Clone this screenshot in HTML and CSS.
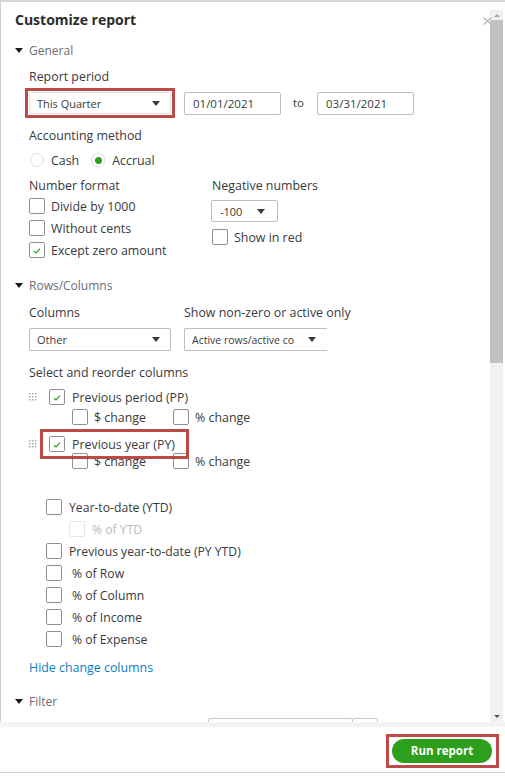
FILE: index.html
```html
<!DOCTYPE html>
<html>
<head>
<meta charset="utf-8">
<link rel="stylesheet" href="styles.css">
</head>
<body>
<div class="window">
  <div class="main">
    <div class="content">
      <h1 class="title">Customize report</h1>

      <div class="section-head m-general"><span class="tri"></span>General</div>
      <div class="body">
        <div class="label m-period">Report period</div>
        <div class="period-row">
          <div class="hl hl-period">
            <div class="select sel-period"><span>This Quarter</span><span class="caret"></span></div>
          </div>
          <div class="input date">01/01/2021</div>
          <span class="to">to</span>
          <div class="input date">03/31/2021</div>
        </div>

        <div class="label m-acct">Accounting method</div>
        <div class="radio-row">
          <span class="radio"></span><span class="rtext">Cash</span>
          <span class="radio on"></span><span class="rtext">Accrual</span>
        </div>

        <div class="num-grid">
          <div class="col">
            <div class="label">Number format</div>
            <div class="cb-list">
              <div class="cb-row"><span class="cb"></span><span>Divide by 1000</span></div>
              <div class="cb-row"><span class="cb"></span><span>Without cents</span></div>
              <div class="cb-row"><span class="cb"><svg viewBox="0 0 14 14" width="14" height="14"><path d="M4 8.2 L6 10 L10 5.6" fill="none" stroke="#2ca01c" stroke-width="1.2"/></svg></span><span>Except zero amount</span></div>
            </div>
          </div>
          <div class="col">
            <div class="label">Negative numbers</div>
            <div class="select sel-neg"><span>-100</span><span class="caret"></span></div>
            <div class="cb-row show-red"><span class="cb"></span><span>Show in red</span></div>
          </div>
        </div>
      </div>

      <div class="section-head m-rows"><span class="tri"></span>Rows/Columns</div>
      <div class="body">
        <div class="cols-grid">
          <div class="label">Columns</div>
          <div class="label">Show non-zero or active only</div>
          <div class="select sel-other"><span>Other</span><span class="caret"></span></div>
          <div class="select sel-active"><span class="clip">Active rows/active co</span><span class="caret"></span></div>
        </div>

        <div class="label m-reorder">Select and reorder columns</div>

        <div class="re-row m-pp">
          <svg class="drag" viewBox="0 0 8 8" width="8" height="8"><g fill="#a8abb0"><rect x="0" y="0" width="1.5" height="1.5"/><rect x="3" y="0" width="1.5" height="1.5"/><rect x="6" y="0" width="1.5" height="1.5"/><rect x="0" y="3" width="1.5" height="1.5"/><rect x="3" y="3" width="1.5" height="1.5"/><rect x="6" y="3" width="1.5" height="1.5"/><rect x="0" y="6" width="1.5" height="1.5"/><rect x="3" y="6" width="1.5" height="1.5"/><rect x="6" y="6" width="1.5" height="1.5"/></g></svg>
          <span class="cb"><svg viewBox="0 0 14 14" width="14" height="14"><path d="M4 8.2 L6 10 L10 5.6" fill="none" stroke="#2ca01c" stroke-width="1.2"/></svg></span>
          <span class="re-text">Previous period (PP)</span>
        </div>
        <div class="sub-row m-sub1">
          <div class="sub-item"><span class="cb"></span><span>$ change</span></div>
          <div class="sub-item"><span class="cb"></span><span>% change</span></div>
        </div>

        <div class="re-row m-py">
          <svg class="drag" viewBox="0 0 8 8" width="8" height="8"><g fill="#a8abb0"><rect x="0" y="0" width="1.5" height="1.5"/><rect x="3" y="0" width="1.5" height="1.5"/><rect x="6" y="0" width="1.5" height="1.5"/><rect x="0" y="3" width="1.5" height="1.5"/><rect x="3" y="3" width="1.5" height="1.5"/><rect x="6" y="3" width="1.5" height="1.5"/><rect x="0" y="6" width="1.5" height="1.5"/><rect x="3" y="6" width="1.5" height="1.5"/><rect x="6" y="6" width="1.5" height="1.5"/></g></svg>
          <div class="hl hl-py">
            <span class="cb"><svg viewBox="0 0 14 14" width="14" height="14"><path d="M4 8.2 L6 10 L10 5.6" fill="none" stroke="#2ca01c" stroke-width="1.2"/></svg></span>
            <span class="re-text">Previous year (PY)</span>
          </div>
        </div>
        <div class="sub-row m-sub2">
          <div class="sub-item"><span class="cb"></span><span>$ change</span></div>
          <div class="sub-item"><span class="cb"></span><span>% change</span></div>
        </div>

        <div class="extra-list">
          <div class="ex-row"><span class="cb"></span><span>Year-to-date (YTD)</span></div>
          <div class="ex-row ex-sub disabled"><span class="cb"></span><span>% of YTD</span></div>
          <div class="ex-row"><span class="cb"></span><span>Previous year-to-date (PY YTD)</span></div>
          <div class="ex-row wide"><span class="cb"></span><span>% of Row</span></div>
          <div class="ex-row wide"><span class="cb"></span><span>% of Column</span></div>
          <div class="ex-row wide"><span class="cb"></span><span>% of Income</span></div>
          <div class="ex-row wide"><span class="cb"></span><span>% of Expense</span></div>
        </div>

        <div class="link">Hide change columns</div>
      </div>

      <div class="section-head m-filter"><span class="tri"></span>Filter</div>
      <div class="body">
        <div class="partial">
          <div class="pinput p1"></div>
          <div class="pinput p2"></div>
        </div>
      </div>
    </div>

    <div class="scrollbar">
      <div class="sb-up"><span class="up-tri"></span></div>
      <div class="sb-thumb"></div>
      <div class="sb-track"></div>
      <div class="sb-down"><span class="down-tri"></span></div>
    </div>

    <svg class="close" viewBox="0 0 9 8" width="9" height="8"><path d="M0.5 0.5 L8.5 7.5 M8.5 0.5 L0.5 7.5" stroke="#b3b3b3" stroke-width="1.1"/></svg>
  </div>

  <div class="divider"></div>
  <div class="footer">
    <div class="hl hl-run"><button class="run">Run report</button></div>
  </div>
</div>
</body>
</html>
```

FILE: styles.css
```css
* { box-sizing: border-box; }

body {
  margin: 0;
  background: #fff;
  font-family: "Open Sans", "Liberation Sans", sans-serif;
  color: #393a3d;
}

.window {
  width: 505px;
  height: 776px;
  border-top: 2px solid #d3d4d6;
  display: flex;
  flex-direction: column;
  overflow: hidden;
}

.main {
  height: 720px;
  display: flex;
  border-left: 1px solid #cfd0d2;
  position: relative;
  flex: none;
}

.content {
  flex: 1;
  overflow: hidden;
  padding-left: 14px;
}

.title {
  margin: 10px 0 0;
  height: 16px;
  line-height: 16px;
  font-size: 14px;
  font-weight: 700;
  color: #2b2c2f;
}

.section-head {
  display: flex;
  align-items: center;
  height: 16px;
  font-size: 12px;
  color: #6b6c72;
}
.m-general { margin-top: 14px; }
.m-rows { margin-top: 16px; }
.m-filter { margin-top: 17px; }

.tri {
  width: 0;
  height: 0;
  border-left: 4px solid transparent;
  border-right: 4px solid transparent;
  border-top: 5px solid #1c1c1e;
  margin-right: 6px;
}

.body { padding-left: 14px; }

.label {
  height: 16px;
  line-height: 16px;
  font-size: 12.4px;
  white-space: nowrap;
  color: #393a3d;
}
.m-period { margin-top: 11px; }
.m-acct { margin-top: 10px; }
.m-reorder { margin-top: 14px; }

/* highlight annotation frames */
.hl {
  border: 3px solid #be4a47;
}

.period-row {
  margin-top: 3px;
  height: 30px;
  display: flex;
  align-items: center;
}

.hl-period {
  margin-left: -4px;
  padding: 1px;
  width: 150px;
  height: 30px;
}

.select {
  display: flex;
  align-items: center;
  justify-content: space-between;
  border: 1px solid #babec5;
  border-radius: 2px;
  background: #fff;
  font-size: 11px;
  color: #393a3d;
  white-space: nowrap;
}
.caret {
  width: 0;
  height: 0;
  border-left: 4px solid transparent;
  border-right: 4px solid transparent;
  border-top: 5px solid #393a3d;
  flex: none;
}

.sel-period {
  width: 142px;
  height: 22px;
  padding: 0 10px 0 7px;
  border-color: #e2e3e5;
}

.input {
  border: 1px solid #babec5;
  border-radius: 2px;
  font-size: 11.5px;
  line-height: 21px;
  color: #393a3d;
}
.date {
  width: 97px;
  height: 23px;
  padding-left: 8px;
  margin-left: 9px;
}
.to {
  font-size: 11.5px;
  margin: 0 4px 0 12px;
  line-height: 16px;
}

.radio-row {
  margin-top: 8px;
  height: 16px;
  display: flex;
  align-items: center;
  font-size: 12.4px;
}
.radio {
  width: 14px;
  height: 14px;
  border-radius: 50%;
  border: 1px solid #dcdee2;
  margin-left: 1px;
  display: flex;
  align-items: center;
  justify-content: center;
}
.radio.on::after {
  content: "";
  width: 7px;
  height: 7px;
  border-radius: 50%;
  background: #2ca01c;
}
.rtext { margin-left: 7px; margin-right: 11px; }

.num-grid {
  margin-top: 10px;
  display: grid;
  grid-template-columns: 183px auto;
}

.cb-list { margin-top: 1px; }

.cb-row {
  display: flex;
  align-items: center;
  height: 22px;
  font-size: 12.4px;
  gap: 6px;
  white-space: nowrap;
}

.cb {
  width: 16px;
  height: 16px;
  border: 1px solid #8d9096;
  border-radius: 2px;
  background: #fff;
  flex: none;
  display: flex;
  align-items: center;
  justify-content: center;
}

.sel-neg {
  margin-top: 6px;
  margin-left: -1px;
  width: 67px;
  height: 22px;
  padding: 0 12px 0 8px;
}

.show-red {
  margin-top: 5px;
  height: 20px;
}

.cols-grid {
  margin-top: 12px;
  display: grid;
  grid-template-columns: 155px 143px;
  row-gap: 7px;
}

.sel-other {
  width: 142px;
  height: 23px;
  padding: 0 10px 0 7px;
}
.sel-active {
  width: 143px;
  height: 23px;
  padding: 0 11px 0 7px;
  border-right: none;
  border-radius: 2px 0 0 2px;
  font-size: 10.5px;
}
.clip {
  overflow: hidden;
  white-space: nowrap;
}

.re-row {
  display: flex;
  align-items: center;
  font-size: 12.4px;
  white-space: nowrap;
}
.m-pp { margin-top: 8px; height: 16px; }
.m-pp .cb { margin-left: 12px; }
.re-text { margin-left: 7px; }

.drag { flex: none; }

.m-py { margin-top: 4px; height: 30px; }
.hl-py {
  position: relative;
  z-index: 1;
  margin-left: 3px;
  width: 149px;
  height: 30px;
  padding-left: 6px;
  display: flex;
  align-items: center;
}

.sub-row {
  display: flex;
  align-items: center;
  height: 16px;
  padding-left: 43px;
  font-size: 12.4px;
}
.m-sub1 { margin-top: 4px; }
.m-sub2 { margin-top: -6px; }
.sub-item {
  display: flex;
  align-items: center;
  gap: 6px;
  width: 101px;
  white-space: nowrap;
}

.extra-list { margin-top: 27px; }
.ex-row {
  display: flex;
  align-items: center;
  height: 22px;
  padding-left: 17px;
  gap: 7px;
  font-size: 12.2px;
  white-space: nowrap;
}
.ex-row.ex-sub { padding-left: 40px; }
.ex-row.wide { gap: 10px; }
.disabled { color: #b8bbc0; }
.disabled .cb { border-color: #e4e6e9; }

.link {
  margin-top: 10px;
  height: 16px;
  line-height: 16px;
  font-size: 12.4px;
  color: #0a7ecb;
}

.partial {
  margin-top: 9px;
  margin-left: 179px;
  display: flex;
}
.pinput {
  height: 24px;
  border: 1px solid #c4c7cc;
  border-radius: 2px;
}
.p1 { width: 145px; }
.p2 { width: 26px; margin-left: -1px; }

/* scrollbar */
.scrollbar {
  width: 13px;
  margin: 8px 2px 0 0;
  background: #f1f1f1;
  display: flex;
  flex-direction: column;
  flex: none;
}
.sb-up {
  height: 10px;
  display: flex;
  align-items: center;
  justify-content: center;
}
.up-tri {
  width: 0;
  height: 0;
  border-left: 3px solid transparent;
  border-right: 3px solid transparent;
  border-bottom: 3px solid #a3a3a3;
}
.sb-thumb {
  height: 343px;
  background: #c1c1c1;
}
.sb-track { flex: 1; }
.sb-down {
  height: 12px;
  display: flex;
  align-items: center;
  justify-content: center;
}
.down-tri {
  width: 0;
  height: 0;
  border-left: 3px solid transparent;
  border-right: 3px solid transparent;
  border-top: 3px solid #505050;
}

.close {
  position: absolute;
  left: 482px;
  top: 15px;
}

.divider {
  height: 5px;
  background: #f3f4f6;
  flex: none;
}

.footer {
  height: 46px;
  border-bottom: 1px solid #cfd0d2;
  display: flex;
  justify-content: flex-end;
  align-items: flex-start;
  padding: 7px 6px 0 0;
  flex: none;
}

.hl-run {
  width: 113px;
  height: 34px;
  padding: 1px 4px 3px 3px;
}

.run {
  width: 100px;
  height: 24px;
  border: none;
  border-radius: 12px;
  background: #2ca01c;
  color: #fff;
  font-family: "Open Sans", "Liberation Sans", sans-serif;
  font-size: 11.5px;
  font-weight: 700;
  padding: 0;
}
```
